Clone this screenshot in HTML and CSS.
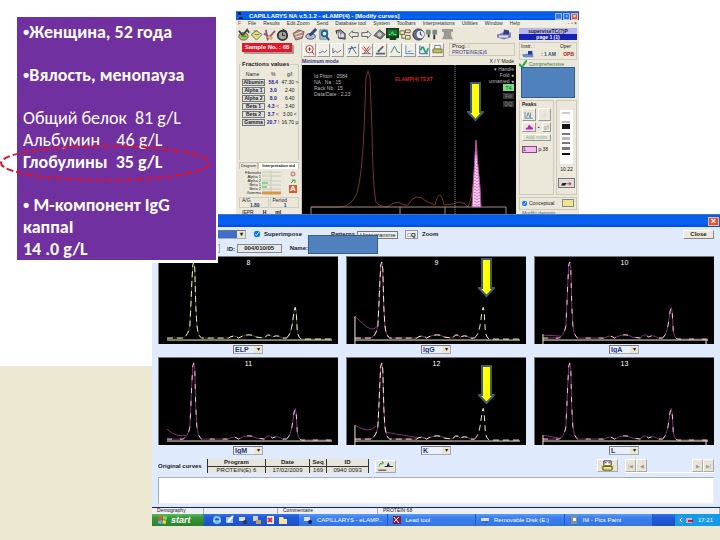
FILE: index.html
```html
<!DOCTYPE html>
<html lang="ru">
<head>
<meta charset="utf-8">
<title>М-компонент IgG</title>
<link rel="stylesheet" href="styles.css">
</head>
<body>
<svg class="defs" aria-hidden="true">
  <defs>
    <path id="albumin" d="M8 82H24Q29 80 31 70L32 50L33 26L34 8L35 5L36 12L37 50L38 68Q39 80 43 82L70 82Q75 78 80 82Q90 76 98 81L106 82Q110 76 114 81Q119 78 124 82H128"/>
    <path id="gamma" d="M128 82Q132 80 134 68L136 54L137 51L138 56L139 74Q140 83 144 83H174"/>
    <path id="base" d="M8 84H174"/>
    <symbol id="arrow" viewBox="0 0 17 40"><path d="M4 1H13V30H16L8.500 38L1 30H4Z" fill="#ff0" stroke="#405b78" stroke-width="2"/></symbol>
  </defs>
</svg>
<main class="slide">

<section class="window analyzer" aria-label="Modify curves">
  <header class="titlebar small">
    <svg viewBox="0 0 8 8"><path d="M1 0h3v3H1zM2 5h4v2H2z" fill="#123"/></svg>
    <span>CAPILLARYS NA v.5.1.2 - eLAMP(4) - [Modify curves]</span>
    <div class="winbtns"><button aria-label="Minimize">_</button><button aria-label="Restore">▫</button><button class="red" aria-label="Close">×</button></div>
  </header>
  <nav class="menu"><i>F</i><a href="#">File</a><a href="#">Results</a><a href="#">Edit Zoom</a><a href="#">Send</a><a href="#">Database tool</a><a href="#">System</a><a href="#">Toolbars</a><a href="#">Interpretations</a><a href="#">Utilities</a><a href="#">Window</a><a href="#">Help</a><span>- ▫ ×</span></nav>
  <div class="frame">
    <div class="mainside">
      <div class="toolbar">
        <svg viewBox="0 0 14 14"><ellipse cx="7" cy="9" rx="5" ry="4" fill="#c9b768" stroke="#564"/><path d="M2 3l4 5 5-6 2 3" fill="none" stroke="#444" stroke-width="2"/><path d="M5 9h5" stroke="#3a3" stroke-width="2"/></svg>
        <svg viewBox="0 0 14 14"><path d="M1 7l6-4 6 4-6 6z" fill="#e2dd79" stroke="#675"/><path d="M5 7h5M4 3h4" stroke="#777"/></svg>
        <svg viewBox="0 0 14 14"><path d="M3 2l2 10 8-9M1 6l9 5" fill="none" stroke="#957" stroke-width="2"/><path d="M5 9l5 3" stroke="#cb7" stroke-width="3"/></svg>
        <svg viewBox="0 0 14 14"><circle cx="7" cy="8" r="5" fill="#a3aaa5" stroke="#333" stroke-width="2"/><path d="M7 1l5 3M7 5v3h3" stroke="#222" fill="none"/></svg>
        <svg class="gap" viewBox="0 0 14 14"><path d="M1 6l6-4 6 2-2 7-7 2z" fill="#b89582" stroke="#755"/><path d="M3 7l8-3M4 10l7-2" stroke="#eee"/></svg>
        <svg viewBox="0 0 14 14"><ellipse cx="6" cy="9" rx="5" ry="3" fill="#aebee0" stroke="#446"/><path d="M5 8l7-7" stroke="#347" stroke-width="3"/></svg>
        <svg viewBox="0 0 14 14"><path d="M2 2h8v10H2z" fill="#a8c5c9" stroke="#688"/><circle cx="7" cy="6" r="3" fill="#def" stroke="#268" stroke-width="2"/><path d="M9 9l3 4" stroke="#258" stroke-width="2"/></svg>
        <svg class="gap" viewBox="0 0 14 14"><path d="M2 3l5-1 5 4v6l-7-1z" fill="#889" stroke="#333"/><path d="M4 5v5M6 5v5" stroke="#eee"/><circle cx="9" cy="8" r="2" fill="#ddd"/></svg>
        <svg viewBox="0 0 14 14"><path d="M2 7l4-4v2h6v4H6v2z" fill="#eee" stroke="#555"/></svg>
        <svg viewBox="0 0 14 14"><path d="M12 7L8 3v2H2v4h6v2z" fill="#eee" stroke="#555"/></svg>
        <svg viewBox="0 0 14 14"><path d="M1 8l6-6 6 5-5 5z" fill="#888d88" stroke="#444"/><circle cx="7" cy="7" r="3" fill="#ccc" stroke="#666"/></svg>
        <svg viewBox="0 0 14 14"><path d="M1 1h12v9H1zM4 12h7" fill="#187630" stroke="#163d20" stroke-width="2"/><path d="M3 7h2l2-3 1 3h3" fill="none" stroke="#6e7"/></svg>
        <svg viewBox="0 0 14 14"><path d="M1 3h5v4H1zM7 8h5v4H7zM7 2h5v3H7zM3 7v4h4" fill="#f3e68a" stroke="#666"/></svg>
        <svg viewBox="0 0 14 14"><circle cx="7" cy="7" r="6" fill="#668" stroke="#333"/><circle cx="9" cy="7" r="4" fill="#e8f0ff"/><path d="M9 4v3l2 1" stroke="#222" fill="none"/></svg>
        <svg viewBox="0 0 14 14"><path d="M1 2h5v5H1zM8 2h5v5H8z" fill="#778b80"/><path d="M4 7v3M10 7v5" stroke="#333" stroke-width="2"/></svg>
        <svg class="gap" viewBox="0 0 14 14"><path d="M1 1h12v3h-2v4l2 4H1l2-4V4H1z" fill="#9b9a92"/></svg>
        <svg class="device" viewBox="0 0 16 12"><path d="M1 6l6-2h8v5l-7 2-7-2z" fill="#8880c0"/><path d="M8 1l5 1v4H7z" fill="#333d8c"/><path d="M3 8h9" stroke="#ddf" stroke-width="2"/></svg>
      </div>
      <div class="work">
        <aside class="fractions">
          <div class="sample">Sample No. : 68</div>
          <fieldset class="values">
            <legend>Fractions values</legend>
            <table>
              <thead><tr><th>Name</th><th>%</th><th>g/l</th></tr></thead>
              <tbody>
                <tr><td><button>Albumin</button></td><td>58.4</td><td>47.30 &gt;</td></tr>
                <tr><td><button>Alpha 1</button></td><td>3.0</td><td>2.40</td></tr>
                <tr><td><button>Alpha 2</button></td><td>8.0</td><td>6.40</td></tr>
                <tr><td><button>Beta 1</button></td><td>4.3 <em>&lt;</em></td><td>3.40</td></tr>
                <tr><td><button>Beta 2</button></td><td>3.7 <em>&lt;</em></td><td>3.00 &lt;</td></tr>
                <tr><td><button>Gamma</button></td><td>20.7 <em>!</em></td><td>16.70 µ</td></tr>
              </tbody>
            </table>
          </fieldset>
          <div class="tabs"><button>Diagram</button><button class="on">Interpretation aid</button></div>
          <div class="aid">
            <svg viewBox="0 0 20 24"><path d="M0 1h19M0 5h19M0 10h19M0 14h19M0 18h19M9 0v24" stroke="#c8c8bd"/><path d="M0 3h9M0 8h9M0 20h8" stroke="#cfe3bb"/><path d="M0 12h6M0 16h5" stroke="#8fd096" stroke-width="2"/><path d="M0 22h19" stroke="#d99449" stroke-width="3"/></svg>
            <ul><li>Fibrinolis</li><li>Alpha 1</li><li>Alpha 2</li><li>Beta 1</li><li>Beta 2</li><li>Gamma</li></ul>
            <div class="marks"><svg viewBox="0 0 8 14"><circle cx="4" cy="3" r="2" fill="#ebd9d9" stroke="#aa6870"/><path d="M1 8h6v5H1z" fill="#dfecd9"/><path d="M2 12l3-3M3 9h3v3" fill="none" stroke="#3b9c4c"/></svg><b>A</b></div>
          </div>
          <div class="ratio"><div>A/G<b>1.89</b></div><div>Period<b>1</b></div></div>
          <div class="iepr">IEPR <b>H</b> <b>ml</b></div>
        </aside>
        <div class="center">
          <div class="tools">
            <button aria-label="Zoom"><svg viewBox="0 0 12 12"><circle cx="6" cy="5" r="4" fill="#fff" stroke="#933"/><path d="M4 5h4M6 3v4M9 8l2 3" stroke="#a22"/></svg></button>
            <button aria-label="Curve"><svg viewBox="0 0 12 12"><path d="M1 9h2l2-2 2 2 3-3" fill="none" stroke="#567"/></svg></button>
            <button aria-label="Fit"><svg viewBox="0 0 12 12"><path d="M1 4v5l3-2 2 2 4-3" fill="none" stroke="#567"/></svg></button>
            <button aria-label="Add cursor"><svg viewBox="0 0 12 12"><path d="M2 10l3-8 5 8M1 5l9-2" fill="none" stroke="#368"/></svg></button>
            <button aria-label="Delete"><svg viewBox="0 0 12 12"><path d="M1 3l5 6 5-6M1 10h10" fill="none" stroke="#678"/><path d="M3 2l6 8M9 2l-6 8" stroke="#d22"/></svg></button>
            <button aria-label="Edit"><svg viewBox="0 0 12 12"><path d="M1 10h10M3 8l6-6" stroke="#576577" stroke-width="2"/></svg></button>
            <button aria-label="Overlay"><svg viewBox="0 0 12 12"><path d="M1 9l4-7 3 6 3 1" fill="none" stroke="#299250"/></svg></button>
            <button aria-label="Scale"><svg viewBox="0 0 12 12"><path d="M2 1v9h9M4 8l4-1" fill="none" stroke="#58a"/></svg></button>
            <button aria-label="Undo"><svg viewBox="0 0 12 12"><path d="M2 1v9h9" fill="none" stroke="#35a"/><path d="M3 6q2-6 4 0t4-2" fill="none" stroke="#2aa080" stroke-width="2"/></svg></button>
            <button aria-label="Print"><svg viewBox="0 0 12 12"><path d="M3 1h6v4H3z" fill="#fff" stroke="#777"/><path d="M1 5h10v4H1z" fill="#c8bd46" stroke="#775"/></svg></button>
            <div class="prog"><span>Prog. :</span><b>PROTEINE(E)6</b></div>
          </div>
          <div class="modes"><b>Minimum mode</b><span>X / Y Mode</span></div>
          <div class="bigplot">
            <svg viewBox="0 0 214 149" preserveAspectRatio="none">
              <path d="M9 142H38Q50 141 55 128Q60 110 62 66L64 12L66 6L68 12L70 66Q71 125 74 137Q76 141 86 142Q94 134 102 140H106Q113 126 124 136L133 140Q138 120 142 140L151 139Q160 134 166 142Q171 132 173 100L174 76" fill="none" stroke="#77352d"/>
              <path d="M9 149V142H204V149M98 142v7M143 142v7" fill="none" stroke="#a58d84"/>
              <path d="M153 0V149" stroke="#999" stroke-dasharray="1 1"/>
              <path d="M170 142L171 122L173 90L174 75L175 90L178 122L179 142Z" fill="#f3c6ed" stroke="#b34ca2"/>
              <path d="M175 83v58M173 100v41M177 112v29" stroke="#a24b98" stroke-dasharray="1 2"/>
            </svg>
            <p class="info">Id Pitton : 0584<br>NA : Na : 15<br>Rack Nb : 15<br>Data/Date : 2.23</p>
            <strong>ELAMP(4) TEXT</strong>
            <div class="keys"><span>▾ Handle</span><span>Fold ●</span><span>unnamed ●</span><button class="go">T4</button><button>Fol</button><button>OQ</button></div>
          </div>
        </div>
      </div>
    </div>
    <aside class="sidebar">
      <div class="user">superviseTC(?)P</div><div class="page">page 1 (1)</div>
      <div class="instr"><span>Instr. :</span><span>Oper</span><svg viewBox="0 0 16 10"><path d="M1 5l5-1h8v4H3z" fill="#648ad1"/><path d="M8 1h5v4H8z" fill="#22399b"/></svg><b>: 1 AM <em>OPB</em></b></div>
      <div class="ok"><svg viewBox="0 0 8 8"><path d="M0 4l3 3 5-7" fill="none" stroke="#23ad45" stroke-width="2"/></svg>Comprehensive</div>
      <div class="redacted"></div>
      <div class="peaks">
        <div class="edit">
          <b>Peaks</b>
          <div class="tall"><button><svg viewBox="0 0 12 10"><path d="M1 1v8h10M3 8l2-6 2 6M8 2v6" fill="none" stroke="#55739c"/></svg></button><button class="off">⟋</button></div>
          <div><button><svg viewBox="0 0 12 10"><path d="M2 8h9V6L9 5 6 2 4 6H2z" fill="#bb28b5"/></svg></button><span>▪</span><button class="off">g/l</button></div>
          <button class="auto">Add more</button>
          <p><i>1</i> p.38</p>
        </div>
        <div class="gel"><svg viewBox="0 0 15 56"><path d="M0 0h15v56H0z" fill="#fff" stroke="#ccc"/><path d="M3 3h8v2H3z" fill="#ccc"/><path d="M3 15h8v5H3z" fill="#161616"/><path d="M3 12h8v2H3zM3 28h8v3H3z" fill="#bbb"/><path d="M3 24h8v2H3zM3 33h8v2H3zM3 38h8v3H3z" fill="#777"/><path d="M3 44h8v2H3z" fill="#111"/></svg><span>10.22</span><button aria-label="Send">▰<em>➜</em></button></div>
      </div>
      <div class="control"><label><input type="checkbox" checked>Conceptual</label><button aria-label="Note"></button></div>
      <div class="patient">Modify demogr.</div>
    </aside>
  </div>
</section>

<section class="window typing" aria-label="Immunotyping">
  <header class="titlebar"><button class="red" aria-label="Close">×</button></header>
  <div class="content">
    <div class="options">
      <span class="combo wide"><select aria-label="Curve"><option></option></select></span>
      <label><input type="checkbox" checked>Superimpose</label>
      <label class="patt">Patterns <input type="text" value="Histogramme"></label>
      <button class="zq" aria-label="Zoom">□Q</button><span>Zoom</span>
      <button class="close">Close</button>
    </div>
    <div class="ident"><i></i><label>ID: <input type="text" value="004/010/05"></label><span>Name:</span></div>
    <div class="plots">
      <figure><div class="plot"><span>8</span><svg viewBox="0 0 180 88" preserveAspectRatio="none"><g class="dark"><use href="#albumin"/><use href="#gamma"/></g><g class="light"><use href="#albumin"/><use href="#gamma"/></g><use href="#base" class="line"/></svg></div><figcaption class="combo"><select aria-label="8"><option>ELP</option></select></figcaption></figure>
      <figure><div class="plot"><span>9</span><svg viewBox="0 0 180 88" preserveAspectRatio="none"><g class="violet"><path d="M8 60L20 71Q28 75 30 70"/><use href="#albumin"/></g><g class="light"><use href="#albumin"/><use href="#gamma"/></g><path d="M8 60V88" class="line"/><use href="#base" class="line"/></svg></div><figcaption class="combo"><select aria-label="9"><option>IgG</option></select></figcaption></figure>
      <figure><div class="plot"><span>10</span><svg viewBox="0 0 180 88" preserveAspectRatio="none"><g class="violet"><path d="M8 79L26 80"/><use href="#albumin"/><use href="#gamma"/></g><g class="fleck"><use href="#albumin"/><use href="#gamma"/></g><path d="M8 78V88M172 84V88" class="line"/><use href="#base" class="line"/></svg></div><figcaption class="combo"><select aria-label="10"><option>IgA</option></select></figcaption></figure>
      <figure><div class="plot"><span>11</span><svg viewBox="0 0 180 88" preserveAspectRatio="none"><g class="violet"><path d="M8 72Q18 81 28 78"/><use href="#albumin"/><use href="#gamma"/></g><g class="fleck"><use href="#albumin"/><use href="#gamma"/></g><use href="#base" class="line"/></svg></div><figcaption class="combo"><select aria-label="11"><option>IgM</option></select></figcaption></figure>
      <figure><div class="plot"><span>12</span><svg viewBox="0 0 180 88" preserveAspectRatio="none"><g class="violet"><path d="M8 68Q22 77 29 69M39 75Q65 80 78 81"/><use href="#albumin"/></g><g class="light"><use href="#albumin"/><use href="#gamma"/></g><path d="M8 68V88" class="line"/><use href="#base" class="line"/></svg></div><figcaption class="combo"><select aria-label="12"><option>K</option></select></figcaption></figure>
      <figure><div class="plot"><span>13</span><svg viewBox="0 0 180 88" preserveAspectRatio="none"><g class="violet"><path d="M8 78L24 81"/><use href="#albumin"/><use href="#gamma"/></g><g class="fleck"><use href="#albumin"/><use href="#gamma"/></g><path d="M8 78V88M172 84V88" class="line"/><use href="#base" class="line"/></svg></div><figcaption class="combo"><select aria-label="13"><option>L</option></select></figcaption></figure>
    </div>
    <div class="original">
      <span>Original curves</span>
      <table><thead><tr><th>Program</th><th>Date</th><th>Seq</th><th>ID</th></tr></thead><tbody><tr><td>PROTEIN(E) 6</td><td>17/02/2009</td><td>169</td><td>0940 0093</td></tr></tbody></table>
      <button aria-label="Restore curve"><svg viewBox="0 0 20 12"><path d="M2 10h9M9 6h9" stroke="#222"/><path d="M3 6Q3 2 7 2M6 0l2 2-2 2" fill="none" stroke="#289944"/><path d="M11 6l2-5 2 5z" fill="#17307a"/></svg></button>
      <div class="nav"><button class="print" aria-label="Print"><svg viewBox="0 0 20 12"><path d="M6 1h8v5H6z" fill="#fff" stroke="#222"/><path d="M7 3h2m2 0h2" stroke="#222"/><path d="M3 6h14v4H3z" fill="#ddd666"/><path d="M5 7h10v4H5z" fill="#eee87c" stroke="#443"/></svg></button><div class="pager"><button aria-label="First">|◀</button><button aria-label="Previous">◀</button><i></i><button aria-label="Next">▶</button><button aria-label="Last">▶|</button></div></div>
    </div>
    <textarea aria-label="Comments"></textarea>
  </div>
  <div class="status"><span>Demography</span><span></span><span>Commentaire</span><span>PROTEIN 68</span></div>
  <footer class="taskbar">
    <button class="start"><svg viewBox="0 0 12 12"><path d="M1 2l4-1v4L0 6z" fill="#ef5133"/><path d="M6 1l5 1-1 4-4-1z" fill="#8bd44d"/><path d="M0 7l5-1-1 5-4-1z" fill="#6fa5f5"/><path d="M6 6l4 1-1 4-4-1z" fill="#fbd13b"/></svg>start</button>
    <div class="quick">
      <svg viewBox="0 0 10 10"><circle cx="5" cy="5" r="3" fill="none" stroke="#77c8ff" stroke-width="2"/><path d="M1 6h8" stroke="#cef"/></svg>
      <svg viewBox="0 0 10 10"><path d="M1 2h7v6H1z" fill="#9cc6e8"/><path d="M3 7l5-6" stroke="#fff" stroke-width="2"/></svg>
      <svg viewBox="0 0 10 10"><path d="M1 2h6v4H1z" fill="#dde"/><circle cx="7" cy="7" r="2" fill="#334"/></svg>
      <svg viewBox="0 0 10 10"><path d="M1 1h5v5H1z" fill="#ccd"/><path d="M4 5h5v4H4z" fill="#c59b55"/></svg>
      <svg viewBox="0 0 10 10"><path d="M2 1h7v8H2z" fill="#eee"/><path d="M3 3l4 4M7 3L3 7" stroke="#d33" stroke-width="2"/></svg>
      <svg viewBox="0 0 10 10"><path d="M1 2h4l1 2h3v5H1z" fill="#f5e39b"/></svg>
    </div>
    <button class="task"><svg viewBox="0 0 10 10"><path d="M1 2h6v4H1z" fill="#dde"/><circle cx="7" cy="7" r="2" fill="#223"/></svg>CAPILLARYS - eLAMP...</button>
    <button class="task"><svg viewBox="0 0 10 10"><path d="M1 1h8v8H1z" fill="#811f45"/><path d="M2 2l5 6M7 2L2 7" stroke="#eee"/></svg>Lead tool</button>
    <button class="task"><svg viewBox="0 0 10 10"><path d="M1 3h8v3H1z" fill="#d7dce5"/><path d="M3 7h5" stroke="#557"/></svg>Removable Disk (E:)</button>
    <button class="task"><svg viewBox="0 0 10 10"><path d="M2 1h6v8H2z" fill="#8a9181"/><path d="M4 3h3v3H4z" fill="#eee"/></svg>IM - Pics Paint</button>
    <div class="tray"><svg viewBox="0 0 18 10"><circle cx="5" cy="5" r="4" fill="#2e9ae8"/><path d="M6 3L4 5l2 2" fill="none" stroke="#fff"/><path d="M10 3h6v5h-6z" fill="#cdb3c5"/><path d="M12 6h5" stroke="#b23" stroke-width="2"/></svg>17:21</div>
  </footer>
</section>

<article class="notes">
  <p><b><span class="dot">•</span>Женщина, 52 года</b></p>
  <p><b><span class="dot">•</span>Вялость, менопауза</b></p>
  <p>Общий белок&nbsp; 81 g/L<br>Альбумин&nbsp;&nbsp;&nbsp; 46 g/L<br><b>Глобулины&nbsp; 35 g/L</b></p>
  <p><b><span class="dot">•</span> М-компонент IgG<br>каппаI<br>14 .0 g/L</b></p>
</article>
<svg class="ring" viewBox="0 0 212 38"><ellipse cx="105" cy="19" rx="104" ry="17" fill="none" stroke="#d8152b" stroke-width="2" stroke-dasharray="7 3"/></svg>
<div class="cover"></div>
<svg class="pointer first"><use href="#arrow"/></svg>
<svg class="pointer second"><use href="#arrow"/></svg>
<svg class="pointer third"><use href="#arrow"/></svg>
</main>
</body>
</html>
```
FILE: styles.css
```css
* { box-sizing: border-box; }
body { margin: 0; font: 6px/8px "Liberation Sans", sans-serif; color: #222; background: #ede8d2; }
button, input, select, textarea { font: inherit; color: inherit; margin: 0; padding: 0; border-radius: 0; }
svg { display: block; }
p, ul, figure, fieldset { margin: 0; padding: 0; }
ul { list-style: none; }
em, i { font-style: normal; }
a { color: inherit; text-decoration: none; }
.defs { position: absolute; width: 0; height: 0; }
.slide { position: relative; min-height: 540px; overflow: hidden; background: linear-gradient(#fff 366px, #ede8d2 366px); }
.window { position: absolute; overflow: hidden; }

.titlebar { display: flex; align-items: center; justify-content: flex-end; height: 13px; padding: 0 1px; border-top: 1px solid #3e79cf; background: linear-gradient(#075be5, #0762f5 70%, #034ad0); color: #fff; font-weight: bold; }
.titlebar button { width: 11px; height: 9px; border: 1px solid #9fc0f8; background: #3872e5; font: bold 9px/7px "Liberation Sans", sans-serif; color: #fff; }
.titlebar .red { background: #d65638; border-color: #f0b6a5; }
.titlebar.small { height: 9px; }
.titlebar.small span { flex: 1; white-space: nowrap; }
.titlebar.small svg { width: 8px; height: 8px; margin-right: 4px; }
.winbtns { display: flex; gap: 1px; }
.titlebar.small button { width: 7px; height: 7px; font-size: 6px; line-height: 5px; }

.analyzer { left: 236px; right: 141px; top: 11px; height: 206px; background: #ebe7d9; }
.menu { display: flex; gap: 7px; height: 7px; padding: 0 2px; white-space: nowrap; font-size: 5px; line-height: 7px; background: #f0ede2; color: #333; }
.menu i { color: #c33; }
.menu span { margin-left: auto; }
.frame { display: grid; grid-template-columns: 1fr 63px; }
.mainside { min-width: 0; }
.toolbar { display: flex; align-items: center; height: 15px; padding: 0 4px 0 1px; }
.toolbar svg { width: 13px; height: 13px; flex: none; }
.toolbar .gap { margin-left: 3px; }
.toolbar .device { width: 16px; margin-left: auto; }
.work { display: grid; grid-template-columns: 66px 1fr; }
.fractions { padding: 1px 2px 0 3px; border-right: 1px solid #d0ccbd; }
.sample { width: 50px; margin: 0 0 9px 3px; height: 9px; background: #e5162a; color: #fff; text-align: center; font-weight: bold; white-space: nowrap; box-shadow: 2px 2px #a69c94; }
.values { height: 99px; border: 1px solid #cfcbbd; border-width: 1px 1px 0; min-width: 0; }
.values legend { margin-left: 1px; padding: 0 1px; font-weight: bold; line-height: 7px; }
.values table { width: 100%; border-collapse: collapse; table-layout: fixed; margin-top: 2px; }
.values th, .values td { padding: 0; height: 8px; font: 5px/8px "Liberation Sans", sans-serif; text-align: center; white-space: nowrap; }
.values th:first-child { width: 25px; }
.values button { display: block; width: 23px; height: 7px; margin-left: 2px; border: 1px solid #777; background: #ddd; font: bold 5px/5px "Liberation Sans", sans-serif; }
.values td:nth-child(2) { color: #23239b; font-weight: bold; }
.values em { color: #d55; }
.tabs { display: flex; height: 7px; margin-top: 2px; }
.tabs button { border: 1px solid #c7c3b5; border-bottom: 0; background: #ebe7d9; font-size: 4px; line-height: 6px; padding: 0 1px; white-space: nowrap; }
.tabs .on { flex: 1; background: #fff; font-weight: bold; }
.aid { display: flex; height: 26px; padding: 2px 2px 0; }
.aid ul { order: -1; width: 20px; font-size: 4px; line-height: 4px; text-align: right; }
.aid > svg { width: 20px; height: 24px; margin-left: 1px; }
.marks { margin-left: auto; }
.marks svg { width: 8px; height: 14px; }
.marks b { display: block; width: 8px; height: 8px; background: #e3572e; color: #fff; font-size: 8px; line-height: 8px; text-align: center; }
.ratio { display: grid; grid-template-columns: 1fr 1fr; gap: 1px; margin-top: 2px; line-height: 5px; font-size: 5px; }
.ratio div { border: 1px solid #d0ccbf; height: 11px; padding-left: 2px; }
.ratio b { display: block; text-align: center; color: #293b85; }
.iepr { display: flex; gap: 9px; height: 9px; padding-left: 3px; font-size: 5px; }
.tools { display: flex; gap: 1px; height: 16px; padding: 1px 1px 0; }
.tools button { width: 13px; height: 14px; border: 1px solid; border-color: #fff #999 #999 #fff; background: #efede4; flex: none; }
.tools button svg { width: 11px; height: 12px; }
.tools button:nth-of-type(4), .tools button:nth-of-type(7) { margin-left: 1px; }
.prog { flex: 1; margin-left: 4px; border: 1px solid #cbc7b9; height: 13px; line-height: 5px; padding-left: 2px; }
.prog b { display: block; color: #3b3b87; font-weight: normal; font-size: 5px; line-height: 6px; }
.modes { display: flex; justify-content: space-between; height: 7px; padding-right: 2px; line-height: 6px; font-size: 5px; }
.modes b { color: #34338f; font-size: 5px; }
.bigplot { position: relative; height: 150px; background: #000; color: #bbb; font-size: 5px; line-height: 6px; }
.bigplot > svg { width: 100%; height: 149px; }
.bigplot .info, .bigplot strong, .keys { position: absolute; }
.bigplot .info { left: 12px; top: 8px; }
.bigplot strong { left: 93px; top: 11px; color: #d02226; white-space: nowrap; }
.keys { right: 2px; top: 1px; display: flex; flex-direction: column; align-items: flex-end; line-height: 6px; }
.keys button { width: 11px; height: 6px; margin-top: 2px; border: 0; background: #333; color: #888; line-height: 6px; }
.keys .go { height: 7px; margin-top: 0; background: #72df80; color: #133; }

.sidebar { padding: 1px 2px 0 3px; white-space: nowrap; font-size: 5px; }
.user, .page { height: 6px; line-height: 6px; text-align: center; background: #b9b5ed; font-weight: bold; }
.page { background: #1620b5; color: #fff; }
.instr { display: grid; grid-template-columns: 20px 1fr; height: 18px; margin-top: 2px; border: 1px solid #d0ccbf; padding: 0 1px; line-height: 6px; }
.instr span + span { text-align: right; padding-right: 4px; }
.instr svg { width: 14px; height: 9px; }
.instr b { line-height: 9px; color: #357; }
.instr em { color: #a22; padding-left: 6px; }
.ok { display: flex; gap: 2px; height: 8px; line-height: 8px; color: #377c43; }
.ok svg { width: 8px; height: 8px; }
.redacted { height: 31px; margin: -1px 2px 0; border: 1px solid #385d8a; background: #4f81bd; position: relative; }
.peaks { display: grid; grid-template-columns: 1fr 21px; gap: 2px; margin-top: 2px; }
.edit, .gel { border: 1px solid #ccc8ba; height: 95px; padding: 0 2px; }
.edit > b { display: block; line-height: 7px; }
.edit div { display: flex; gap: 2px; align-items: center; margin-bottom: 1px; }
.edit button { flex: 1; height: 10px; border: 1px solid; border-color: #fff #999 #999 #fff; background: #ebe7dc; font-size: 5px; line-height: 8px; }
.edit .tall button { height: 13px; }
.edit div button svg { width: 12px; height: 8px; }
.edit .off { color: #999; }
.edit .auto { width: 100%; height: 7px; line-height: 5px; color: #8bb58a; }
.edit p { margin-top: 5px; line-height: 7px; }
.edit i { display: inline-block; width: 15px; height: 7px; border: 1px solid #824a82; background: #f4b9ed; line-height: 5px; }
.gel { padding: 8px 1px 0; text-align: center; }
.gel svg { width: 15px; height: 56px; margin: auto; }
.gel span { display: block; }
.gel button { width: 100%; height: 10px; margin-top: 5px; border: 1px solid #777; background: #ddd; font-size: 7px; line-height: 7px; }
.gel em { color: #c22; }
.control { display: flex; justify-content: space-between; height: 13px; margin-top: 2px; border: 1px solid #ccc8ba; padding: 1px 2px; line-height: 9px; }
.control input { width: 5px; height: 5px; margin-right: 2px; vertical-align: middle; }
.control button { width: 12px; height: 8px; border: 1px solid #888; background: #ece78e; }
.patient { color: #386a9d; line-height: 6px; text-indent: 3px; }

.typing { left: 152px; right: 0; top: 214px; background: #dfeafc; }
.content { padding: 2px 6px 3px; }
.options { display: flex; align-items: center; height: 11px; padding-left: 58px; line-height: 9px; font-weight: bold; }
.options .wide { width: 30px; margin-right: 8px; }
.options .wide select { background: #3b6fcb; }
.options input[type="checkbox"] { width: 6px; height: 6px; margin: 0 4px 0 0; vertical-align: middle; }
.options .patt { display: flex; align-items: center; margin-left: 29px; }
.options .patt input { width: 41px; height: 8px; margin-left: 2px; padding-left: 2px; border: 1px solid #777; background: #edf0ed; font-weight: normal; line-height: 6px; }
.zq { width: 13px; height: 9px; margin: 0 4px 0 7px; border: 1px solid #999; background: #eee; }
.close { width: 31px; height: 9px; margin-left: auto; border: 1px solid; border-color: #fff #888 #888 #fff; background: #ebe8dc; font-weight: bold; line-height: 7px; }
.ident { display: flex; align-items: center; height: 16px; padding-left: 48px; font-weight: bold; }
.ident > i { width: 14px; height: 9px; border: 1px solid #aaa; background: #e5e8e8; }
.ident label { margin-left: 7px; }
.ident input { width: 45px; height: 9px; border: 1px solid #888; background: #e5e8e8; text-align: center; }
.ident span { margin-left: 8px; }
.combo { display: flex; position: relative; height: 9px; width: 30px; border: 1px solid; border-color: #777 #aaa #aaa #777; background: #e9f0fb; }
.combo select { flex: 1; width: 100%; appearance: none; border: 0; padding-left: 1px; background: transparent; color: #22327b; font: bold 7px/7px "Liberation Sans", sans-serif; }
.combo::after { content: "▾"; position: absolute; right: 0; top: 0; width: 8px; height: 7px; background: #e9e5d7; line-height: 7px; text-align: center; pointer-events: none; }
.plots { display: grid; grid-template-columns: repeat(3, 1fr); gap: 3px 8px; }
.plot { position: relative; background: #000; border-top: 1px solid #777; border-left: 1px solid #777; }
.plot svg { width: 100%; height: 87px; fill: none; }
.plot span { position: absolute; top: 2px; left: 0; right: 0; text-align: center; color: #fff; font-size: 7px; line-height: 7px; }
.plots figcaption { margin: 1px auto 0; }
.violet { stroke: #823479; }
.dark { stroke: #39401f; }
.light { stroke: #f2efba; stroke-dasharray: 6 4; }
.fleck { stroke: #f3c7cf; stroke-dasharray: 5 8; }
.line { stroke: #f4f3d4; }
.original { display: flex; align-items: center; height: 18px; margin-top: 2px; }
.original > span { width: 49px; font-weight: bold; white-space: nowrap; }
.original table { width: 162px; border-collapse: collapse; border: solid #333; border-width: 0 1px; }
.original th, .original td { height: 7px; padding: 0; text-align: center; line-height: 6px; font-weight: bold; background: #e7e4dc; border: solid #333; border-width: 0 1px; }
.original td { font-weight: normal; border-top-width: 1px; }
.original button { height: 13px; padding: 0; border: 1px solid; border-color: #fff #aaa #aaa #fff; background: #e8e4d7; }
.original > button, .original .print { width: 21px; }
.original > button { margin-left: 6px; }
.original button svg { width: 19px; height: 11px; }
.nav { display: flex; gap: 7px; margin-left: auto; }
.pager { display: flex; width: 89px; border-bottom: 1px solid #fff; }
.pager i { flex: 1; }
.pager button { width: 11px; color: #999; font-size: 5px; }
textarea { display: block; width: 100%; height: 27px; margin-top: 2px; border: 1px solid #a7afbb; border-right-color: #eee; border-bottom-color: #eee; background: #fff; resize: none; }
.status { display: grid; grid-template-columns: 52px 74px 100px 1fr; height: 7px; border-top: 1px solid #14217b; background: #edf0f2; line-height: 5px; font-size: 5px; }
.status span { padding-left: 5px; border-right: 1px solid #aaa; overflow: hidden; }
.taskbar { display: flex; height: 12px; background: linear-gradient(#3975ea, #225bd8 25%, #1e50c5); color: #fff; line-height: 10px; }
.taskbar svg { width: 10px; height: 10px; flex: none; }
.start { display: flex; align-items: center; gap: 3px; width: 52px; padding-left: 6px; border: 0; border-radius: 0 4px 4px 0; background: linear-gradient(#65b765, #38963a 30%, #2c812f); font: italic bold 9px/10px "Liberation Sans", sans-serif; }
.quick { display: flex; align-items: center; justify-content: space-between; width: 76px; margin: 0 11px 0 8px; }
.task { display: flex; align-items: center; gap: 4px; flex: 1; min-width: 0; padding-left: 4px; border: 0; border-right: 1px solid #2459c4; background: linear-gradient(#5b9cf8, #3c7fee 30%, #3374e4); white-space: nowrap; overflow: hidden; }
.tray { display: flex; align-items: center; gap: 4px; margin-left: 22px; padding: 0 7px 0 1px; background: #149ae9; }
.tray svg { width: 18px; }

.notes { position: absolute; left: 16px; top: 16px; width: 201px; min-height: 246px; padding: 4px 4px 0 6px; border: 1px solid #fff; border-width: 1px 1px 2px; background: #7030a0; background-clip: padding-box; outline: 1px solid #fff; color: #fff; font: 18px/22px Carlito, Lato, "Open Sans", sans-serif; white-space: nowrap; }
.notes p + p { margin-top: 21px; }
.dot { font-family: "Liberation Sans", sans-serif; line-height: 16px; }
.ring { position: absolute; left: 0; top: 144px; width: 212px; height: 38px; }
.cover { position: absolute; left: 308px; top: 235px; width: 70px; height: 19px; border: 1px solid #385d8a; background: #4f81bd; }
.pointer { position: absolute; width: 17px; height: 40px; }
.first { left: 467px; top: 82px; }
.second { left: 478px; top: 258px; }
.third { left: 478px; top: 365px; }
```
